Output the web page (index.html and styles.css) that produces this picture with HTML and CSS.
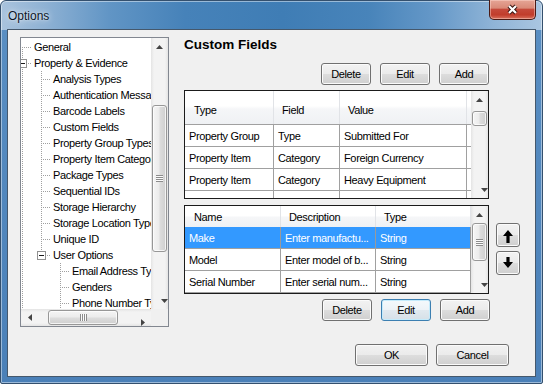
FILE: index.html
```html
<!DOCTYPE html>
<html>
<head>
<meta charset="utf-8">
<title>Options</title>
<link rel="stylesheet" href="styles.css">
</head>
<body>
<div class="window">
  <div class="titlebar">
    <span class="title">Options</span>
    <div class="close">
      <svg width="13" height="11" viewBox="0 0 13 11"><path d="M3 2 L10 9 M10 2 L3 9" stroke="#3a1511" stroke-width="4.2" fill="none"/><path d="M3 2 L10 9 M10 2 L3 9" stroke="#fff" stroke-width="2.2" fill="none"/></svg>
    </div>
  </div>
  <div class="client">
    <div class="main">
      <div class="tree">
        <div class="tree-body">
          <div class="tree-list">
            <div class="node"><span class="g g-first"></span><span class="label">General</span></div>
            <div class="node"><span class="g g-exp-root"><i class="box"></i></span><span class="label">Property &amp; Evidence</span></div>
            <div class="node"><span class="g g-v"></span><span class="g g-t"></span><span class="label">Analysis Types</span></div>
            <div class="node"><span class="g g-v"></span><span class="g g-t"></span><span class="label">Authentication Messages</span></div>
            <div class="node"><span class="g g-v"></span><span class="g g-t"></span><span class="label">Barcode Labels</span></div>
            <div class="node"><span class="g g-v"></span><span class="g g-t"></span><span class="label">Custom Fields</span></div>
            <div class="node"><span class="g g-v"></span><span class="g g-t"></span><span class="label">Property Group Types</span></div>
            <div class="node"><span class="g g-v"></span><span class="g g-t"></span><span class="label">Property Item Categories</span></div>
            <div class="node"><span class="g g-v"></span><span class="g g-t"></span><span class="label">Package Types</span></div>
            <div class="node"><span class="g g-v"></span><span class="g g-t"></span><span class="label">Sequential IDs</span></div>
            <div class="node"><span class="g g-v"></span><span class="g g-t"></span><span class="label">Storage Hierarchy</span></div>
            <div class="node"><span class="g g-v"></span><span class="g g-t"></span><span class="label">Storage Location Types</span></div>
            <div class="node"><span class="g g-v"></span><span class="g g-t"></span><span class="label">Unique ID</span></div>
            <div class="node"><span class="g g-v"></span><span class="g g-exp-last"><i class="box"></i></span><span class="label">User Options</span></div>
            <div class="node"><span class="g g-v"></span><span class="g"></span><span class="g g-t"></span><span class="label">Email Address Types</span></div>
            <div class="node"><span class="g g-v"></span><span class="g"></span><span class="g g-t"></span><span class="label">Genders</span></div>
            <div class="node"><span class="g g-v"></span><span class="g"></span><span class="g g-t"></span><span class="label">Phone Number Types</span></div>
          </div>
        </div>
        <div class="vscroll">
          <div class="sb-btn"><svg width="7" height="4" viewBox="0 0 7 4"><path d="M3.5 0 L7 4 L0 4 Z" fill="#444"/></svg></div>
          <div class="thumb-v tree-thumb"><span class="grip-v"></span></div>
          <div class="sb-btn end"><svg width="7" height="4" viewBox="0 0 7 4"><path d="M0 0 L7 0 L3.5 4 Z" fill="#444"/></svg></div>
        </div>
        <div class="hscroll">
          <div class="sb-btn-h"><svg width="4" height="7" viewBox="0 0 4 7"><path d="M0 3.5 L4 0 L4 7 Z" fill="#444"/></svg></div>
          <div class="thumb-h"><span class="grip-h"></span></div>
          <div class="sb-btn-h end"><svg width="4" height="7" viewBox="0 0 4 7"><path d="M0 0 L4 3.5 L0 7 Z" fill="#444"/></svg></div>
        </div>
        <div class="corner"></div>
      </div>

      <div class="panel">
        <h1 class="heading">Custom Fields</h1>
        <div class="btnrow">
          <button class="btn">Delete</button>
          <button class="btn">Edit</button>
          <button class="btn">Add</button>
        </div>

        <div class="grid grid1">
          <div class="table">
            <div class="r hdr"><div class="c">Type</div><div class="c">Field</div><div class="c">Value</div><div class="c f"></div></div>
            <div class="r row"><div class="c">Property Group</div><div class="c">Type</div><div class="c">Submitted For</div><div class="c f"></div></div>
            <div class="r row"><div class="c">Property Item</div><div class="c">Category</div><div class="c">Foreign Currency</div><div class="c f"></div></div>
            <div class="r row"><div class="c">Property Item</div><div class="c">Category</div><div class="c">Heavy Equipment</div><div class="c f"></div></div>
            <div class="r row"><div class="c">Property Item</div><div class="c">Category</div><div class="c">Lawn Chairs</div><div class="c f"></div></div>
          </div>
          <div class="vscroll">
            <div class="sb-btn"><svg width="7" height="4" viewBox="0 0 7 4"><path d="M3.5 0 L7 4 L0 4 Z" fill="#444"/></svg></div>
            <div class="thumb-v g1-thumb"></div>
            <div class="sb-btn end"><svg width="7" height="4" viewBox="0 0 7 4"><path d="M0 0 L7 0 L3.5 4 Z" fill="#444"/></svg></div>
          </div>
        </div>

        <div class="g2row">
          <div class="grid grid2">
            <div class="table">
              <div class="r hdr"><div class="c">Name</div><div class="c">Description</div><div class="c">Type</div></div>
              <div class="r row sel"><div class="c">Make</div><div class="c">Enter manufactu...</div><div class="c">String</div></div>
              <div class="r row"><div class="c">Model</div><div class="c">Enter model of b...</div><div class="c">String</div></div>
              <div class="r row"><div class="c">Serial Number</div><div class="c">Enter serial num...</div><div class="c">String</div></div>
            </div>
            <div class="vscroll">
              <div class="sb-btn"><svg width="7" height="4" viewBox="0 0 7 4"><path d="M3.5 0 L7 4 L0 4 Z" fill="#444"/></svg></div>
              <div class="thumb-v g2-thumb"><span class="grip-v"></span></div>
              <div class="sb-btn end"><svg width="7" height="4" viewBox="0 0 7 4"><path d="M0 0 L7 0 L3.5 4 Z" fill="#444"/></svg></div>
            </div>
          </div>
          <div class="movers">
            <button class="btn mv mv-up"><svg width="10" height="13" viewBox="0 0 10 13"><path d="M5 0 L10 6 L6.6 6 L6.6 13 L3.4 13 L3.4 6 L0 6 Z" fill="#000"/></svg></button>
            <button class="btn mv mv-down"><svg width="10" height="11" viewBox="0 0 10 11"><path d="M5 11 L10 5 L6.6 5 L6.6 0 L3.4 0 L3.4 5 L0 5 Z" fill="#000"/></svg></button>
          </div>
        </div>

        <div class="btnrow btnrow2">
          <button class="btn">Delete</button>
          <button class="btn focus">Edit</button>
          <button class="btn">Add</button>
        </div>
      </div>
    </div>

    <div class="footer">
      <button class="btn wide">OK</button>
      <button class="btn wide">Cancel</button>
    </div>
  </div>
</div>
</body>
</html>
```

FILE: styles.css
```css
* { box-sizing: border-box; }

html, body {
  margin: 0;
  padding: 0;
  background: #fff;
}

body {
  width: 543px;
  height: 386px;
  overflow: hidden;
  font-family: "Liberation Sans", Arial, sans-serif;
  font-size: 11px;
  letter-spacing: -0.35px;
  color: #000;
}

/* ---------- window frame ---------- */
.window {
  width: 543px;
  height: 384px;
  border: 1px solid #34506e;
  border-radius: 6px 6px 2px 2px;
  padding: 0 6px 6px;
  background:
    linear-gradient(90deg, #a9c3dd 0%, #8fb2d4 8%, #6195c5 20%, #4682b9 34%, #3f7db5 52%, #4884ba 68%, #6598c8 80%, #8fb4d7 91%, #aac6e1 100%) 0 0 / 100% 29px no-repeat,
    linear-gradient(#5a8fc3, #4a80b8);
  box-shadow: inset 0 0 0 1px rgba(255, 255, 255, 0.45);
}

.titlebar {
  height: 28px;
  display: flex;
  align-items: flex-start;
}

.title {
  margin: 7px 0 0 1px;
  font-size: 12px;
  line-height: 16px;
  letter-spacing: 0;
  color: #0c1626;
  text-shadow: 0 0 6px rgba(255, 255, 255, 0.9), 0 0 2px rgba(255, 255, 255, 0.6);
}

.close {
  margin: -1px 0 0 auto;
  width: 47px;
  height: 20px;
  border: 1px solid #4b1a14;
  border-top: 0;
  border-radius: 0 0 5px 5px;
  background: linear-gradient(#e5a596 0%, #d98a78 42%, #c5493a 50%, #c13d2c 78%, #d8705c 100%);
  box-shadow: inset 0 0 0 1px rgba(255, 220, 210, 0.45);
  display: flex;
  align-items: center;
  justify-content: center;
}

.client {
  height: 348px;
  border: 1px solid #45586c;
  background: #f0f0f0;
  display: flex;
  flex-direction: column;
}

.main {
  display: flex;
  align-items: flex-start;
  gap: 15px;
  padding: 7px 0 0 12px;
}

/* ---------- tree ---------- */
.tree {
  width: 149px;
  height: 290px;
  border: 1px solid #828790;
  background: #fff;
  display: grid;
  grid-template-columns: 1fr 17px;
  grid-template-rows: 1fr 17px;
}

.tree-body {
  overflow: hidden;
  padding-top: 1px;
}

.tree-list {
  margin-left: -8px;
}

.node {
  display: flex;
  height: 16px;
  white-space: nowrap;
}

.label {
  padding-left: 2px;
  line-height: 16px;
}

.g {
  flex: none;
  width: 19px;
  height: 16px;
  display: flex;
  align-items: center;
}

.g-v {
  background: repeating-linear-gradient(#a0a0a0 0 1px, transparent 1px 2px) 9px 0 / 1px 16px no-repeat;
}

.g-t {
  background:
    repeating-linear-gradient(#a0a0a0 0 1px, transparent 1px 2px) 9px 0 / 1px 16px no-repeat,
    repeating-linear-gradient(90deg, #a0a0a0 0 1px, transparent 1px 2px) 11px 8px / 8px 1px no-repeat;
}

.g-first {
  background:
    repeating-linear-gradient(#a0a0a0 0 1px, transparent 1px 2px) 9px 8px / 1px 8px no-repeat,
    repeating-linear-gradient(90deg, #a0a0a0 0 1px, transparent 1px 2px) 11px 8px / 8px 1px no-repeat;
}

.g-exp-root {
  background:
    repeating-linear-gradient(#a0a0a0 0 1px, transparent 1px 2px) 9px 0 / 1px 16px no-repeat,
    repeating-linear-gradient(90deg, #a0a0a0 0 1px, transparent 1px 2px) 15px 8px / 4px 1px no-repeat;
}

.g-exp-last {
  background:
    repeating-linear-gradient(#a0a0a0 0 1px, transparent 1px 2px) 9px 0 / 1px 8px no-repeat,
    repeating-linear-gradient(90deg, #a0a0a0 0 1px, transparent 1px 2px) 15px 8px / 4px 1px no-repeat;
}

.box {
  display: block;
  width: 9px;
  height: 9px;
  margin: 0 0 0 5px;
  border: 1px solid #919191;
  background: #fff linear-gradient(#1a1a1a, #1a1a1a) center / 5px 1px no-repeat;
}

/* ---------- scrollbars ---------- */
.vscroll {
  flex: none;
  width: 17px;
  display: flex;
  flex-direction: column;
  background: linear-gradient(90deg, #e4e4e4 0, #f3f3f3 3px, #f3f3f3 14px, #e4e4e4 17px);
}

.hscroll {
  display: flex;
  background: linear-gradient(#e4e4e4 0, #f3f3f3 3px, #f3f3f3 14px, #e4e4e4 17px);
}

.corner {
  background: #f0f0f0;
}

.sb-btn {
  flex: none;
  height: 17px;
  display: flex;
  align-items: center;
  justify-content: center;
}

.sb-btn-h {
  flex: none;
  width: 17px;
  display: flex;
  align-items: center;
  justify-content: center;
}

.end {
  margin-top: auto;
  margin-left: auto;
}

.thumb-v {
  flex: none;
  margin: 0 1px;
  border: 1px solid #979797;
  border-radius: 3px;
  background: linear-gradient(90deg, #f5f5f5 0%, #ececec 45%, #dcdcdc 55%, #cfcfcf 100%);
  box-shadow: inset 0 0 0 1px rgba(255, 255, 255, 0.75);
  display: flex;
  align-items: center;
  justify-content: center;
}

.thumb-h {
  flex: none;
  margin: 1px 0 1px 10px;
  width: 70px;
  border: 1px solid #979797;
  border-radius: 3px;
  background: linear-gradient(#f5f5f5 0%, #ececec 45%, #dcdcdc 55%, #cfcfcf 100%);
  box-shadow: inset 0 0 0 1px rgba(255, 255, 255, 0.75);
  display: flex;
  align-items: center;
  justify-content: center;
}

.tree-thumb { margin-top: 50px; height: 147px; }
.g1-thumb { margin-top: 3px; height: 15px; }
.g2-thumb { height: 38px; }

.grip-v {
  width: 7px;
  height: 7px;
  background: repeating-linear-gradient(#8c8c8c 0 1px, #fbfbfb 1px 2px);
}

.grip-h {
  width: 7px;
  height: 7px;
  background: repeating-linear-gradient(90deg, #8c8c8c 0 1px, #fbfbfb 1px 2px);
}

/* ---------- right panel ---------- */
.panel {
  width: 305px;
  display: flex;
  flex-direction: column;
}

.heading {
  margin: 0;
  height: 16px;
  font-size: 13.5px;
  line-height: 16px;
  font-weight: bold;
  letter-spacing: 0;
}

.btnrow {
  display: flex;
  justify-content: flex-end;
  gap: 9px;
  margin-top: 10px;
}

.btnrow2 {
  margin-top: 5px;
  margin-right: -1px;
}

.btn {
  flex: none;
  width: 50px;
  height: 22px;
  padding: 0;
  font: inherit;
  letter-spacing: inherit;
  color: #000;
  border: 1px solid #707070;
  border-radius: 3px;
  background: linear-gradient(#f2f2f2 0%, #ebebeb 49%, #dddddd 51%, #cfcfcf 100%);
  box-shadow: inset 0 0 0 1px #fbfbfb;
}

.btn.focus {
  border-color: #3c7fb1;
  background: linear-gradient(#f4f9fc 0%, #edf3f7 49%, #e1e9ef 51%, #d6e0e7 100%);
  box-shadow: inset 0 0 0 1px #c4ebfb;
}

.btn.wide {
  width: 73px;
}

/* ---------- grids ---------- */
.grid {
  display: flex;
  border: 1px solid #1b1b1b;
  background: #fff;
}

.grid1 {
  margin-top: 5px;
  height: 109px;
}

.grid2 {
  width: 305px;
  height: 89px;
}

.table {
  flex: 1;
  overflow: hidden;
}

.r {
  display: grid;
}

.grid1 .r { grid-template-columns: 89px 66px 127px 1fr; }
.grid2 .r { grid-template-columns: 96px 95px 95px; }

.c {
  display: flex;
  align-items: center;
  white-space: nowrap;
  overflow: hidden;
}

.hdr {
  background: linear-gradient(#ffffff 0%, #ffffff 45%, #f5f6f8 55%, #eff1f4 100%);
}

.hdr .c {
  border-right: 1px solid #e1e3e7;
  padding-left: 8px;
}

.grid1 .hdr { height: 33px; }
.grid1 .hdr .c { padding-top: 4px; }
.grid2 .hdr { height: 21px; }
.grid2 .hdr .c { padding-top: 1px; }
.grid2 .hdr .c:first-child { padding-left: 9px; }
.grid1 .hdr .c:first-child { padding-left: 9px; }

.row .c {
  border-right: 1px solid #a0a0a0;
  padding-left: 4px;
}

.hdr .c.f,
.row .c.f {
  border-right: 0;
}

.grid1 .row {
  height: 22px;
  border-top: 1px solid #a0a0a0;
}

.grid2 .row {
  height: 22px;
  border-bottom: 1px solid #a0a0a0;
}

.row.sel {
  background: #3399ff;
  color: #fff;
}

.row.sel .c {
  border-right-color: #9a9a9a;
}

.g2row {
  display: flex;
  align-items: flex-start;
  margin-top: 6px;
}

.movers {
  display: flex;
  flex-direction: column;
  gap: 4px;
  margin: 18px 0 0 7px;
}

.btn.mv {
  width: 24px;
  height: 24px;
  display: flex;
  align-items: center;
  justify-content: center;
}

.mv-up svg { margin-top: 2px; }
.mv-down svg { margin-top: -2px; }

/* ---------- footer ---------- */
.footer {
  display: flex;
  justify-content: flex-end;
  gap: 8px;
  margin-top: 17px;
  padding-right: 26px;
}
```
